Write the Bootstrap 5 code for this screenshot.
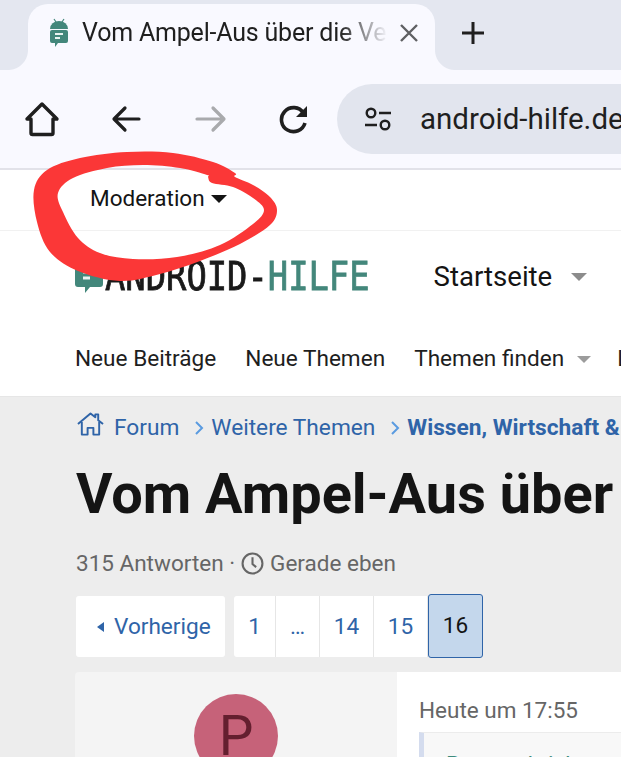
<!DOCTYPE html>
<html lang="de">
<head>
  <meta charset="UTF-8">
  <title>Vom Ampel-Aus über die Vertrauensfrage</title>
  <link href="https://cdn.jsdelivr.net/npm/bootstrap@5.3.3/dist/css/bootstrap.min.css" rel="stylesheet">
  <style>
    html, body {
      height: 757px;
      overflow: hidden;
    }
    body {
      font-family: Roboto, sans-serif;
      background-color: #ededed;
      color: #141414;
      position: relative;
    }
    .tab-strip {
      height: 70px;
      background-color: #e4e7f0;
      padding-left: 28px;
    }
    .browser-tab {
      width: 407px;
      height: 66px;
      background-color: #f9f9ff;
      border-radius: 20px 20px 0 0;
      position: relative;
      padding: 0 16px 8px 21px;
      font-size: 25px;
      letter-spacing: -.2px;
      color: #1f1f1f;
    }
    .browser-tab::before, .browser-tab::after {
      content: "";
      position: absolute;
      bottom: 0;
      width: 20px;
      height: 20px;
    }
    .browser-tab::before {
      left: -20px;
      background: radial-gradient(circle at 0 0, #e4e7f0 19.5px, #f9f9ff 20.5px);
    }
    .browser-tab::after {
      right: -20px;
      background: radial-gradient(circle at 100% 0, #e4e7f0 19.5px, #f9f9ff 20.5px);
    }
    .tab-title {
      width: 306px;
      margin-left: 13px;
      overflow: hidden;
      white-space: nowrap;
      -webkit-mask-image: linear-gradient(to right, #000 84%, transparent 100%);
      mask-image: linear-gradient(to right, #000 84%, transparent 100%);
    }
    .tab-new {
      margin-left: 25px;
      height: 66px;
      padding-bottom: 8px;
    }
    .tool-bar {
      height: 100px;
      background-color: #f9f9ff;
      padding-left: 24px;
      border-bottom: 2px solid #e2e2e9;
    }
    .tool-btn {
      width: 36px;
      flex: none;
      margin-right: 48px;
    }
    .tool-btn:nth-child(3) {
      margin-right: 51px;
    }
    .tool-btn:nth-child(4) {
      margin-right: 22px;
    }
    .url-pill {
      flex: none;
      width: 284px;
      height: 70px;
      border-radius: 35px 0 0 35px;
      background-color: #e2e5ee;
      padding-left: 27px;
      font-size: 29.5px;
      color: #1f1f1f;
      white-space: nowrap;
      overflow: hidden;
    }
    .url-pill svg {
      margin-right: 28px;
      flex: none;
    }
    .mod-bar {
      height: 61px;
      background-color: #fff;
      padding: 0 0 2px 90px;
      border-bottom: 1px solid #f1f1f1;
      font-size: 22.5px;
      color: #141414;
    }
    .caret-down {
      display: inline-block;
      border-style: solid;
      border-color: #141414 transparent transparent;
      border-width: 8px 8px 0;
    }
    .mod-bar .caret-down {
      margin-left: 6px;
    }
    .site-head {
      height: 166px;
      background-color: #fff;
      padding-left: 75px;
      border-bottom: 1px solid #e6e6e6;
    }
    .logo-row {
      height: 92px;
    }
    .logo-mark {
      width: 30px;
      flex: none;
    }
    .logo-text {
      font-family: "DejaVu Sans Mono", monospace;
      font-size: 33.8px;
      color: #1a1a1a;
      -webkit-text-stroke: .7px currentColor;
      transform: scaleY(1.18);
      line-height: 1;
    }
    .logo-text span {
      color: #43877b;
    }
    .main-link {
      margin-left: 64px;
      font-size: 27.6px;
      color: #141414;
    }
    .main-link .caret-down {
      border-color: #8c8c8c transparent transparent;
      border-width: 8px 8px 0;
      margin-left: 19px;
    }
    .sub-nav {
      font-size: 22.6px;
      color: #1e1e1e;
      white-space: nowrap;
      gap: 29px;
      padding-top: 19px;
    }
    .sub-nav .caret-down {
      border-color: #9c9c9c transparent transparent;
      border-width: 7px 7px 0;
      margin-left: 13px;
      vertical-align: 3px;
    }
    .nav-last {
      margin-left: -3px;
    }
    .crumbs {
      padding: 14px 0 0 77px;
      font-size: 22.7px;
      white-space: nowrap;
      color: #2f64a8;
      height: 60px;
    }
    .crumbs svg {
      flex: none;
    }
    .crumb-home {
      margin-right: 10px;
    }
    .crumb-sep {
      margin: 9px 7px 0 15px;
    }
    .crumbs b {
      font-weight: 700;
    }
    .thread-title {
      font-size: 55.9px;
      font-weight: 700;
      margin: 0 0 0 76px;
      white-space: nowrap;
      color: #141414;
      line-height: 74px;
    }
    .thread-meta {
      margin: 17px 0 0 76px;
      font-size: 22.5px;
      line-height: 31px;
      color: #666;
      gap: 6px;
    }
    .pager {
      margin: 17px 0 0 76px;
      gap: 9px;
      height: 62px;
    }
    .pager .pagination {
      --bs-pagination-border-width: 0;
      margin: 0;
    }
    .pager .page-link {
      height: 61px;
      background-color: #fff;
      color: #2f64a8;
      border-right: 1px solid #e6e6e6;
      border-radius: 0;
      font-size: 22.6px;
      display: flex;
      align-items: center;
      justify-content: center;
      padding: 0;
    }
    .pager .page-item:not(:first-child) .page-link {
      margin-left: 0;
    }
    .pager .page-item:first-child .page-link {
      border-radius: 3px 0 0 3px;
    }
    .pager .page-item:last-child .page-link {
      border-radius: 3px;
    }
    .pager .page-item.active .page-link {
      background-color: #c4d7ec;
      color: #141414;
      border: 1px solid #2f64a8;
      height: 64px;
      margin-top: -2px;
    }
    .pager .prev-link {
      width: 149px;
      gap: 10px;
      justify-content: flex-start;
      padding-left: 21px;
      border-right: 0;
      border-radius: 3px !important;
    }
    .prev-link i {
      border-style: solid;
      border-color: transparent #2f64a8 transparent transparent;
      border-width: 5px 7px 5px 0;
    }
    .pager .w-1 { width: 42px; }
    .pager .w-dots { width: 44px; }
    .pager .w-14 { width: 54px; }
    .pager .w-15 { width: 54px; }
    .pager .w-16 { width: 55px; }
    .post-box {
      margin: 14px 0 0 75px;
      height: 90px;
      border-radius: 4px 0 0 0;
      overflow: hidden;
    }
    .post-user {
      width: 322px;
      flex: none;
      background-color: #f4f4f4;
      padding-top: 22px;
    }
    .avatar-p {
      width: 84px;
      height: 84px;
      border-radius: 50%;
      background-color: #c66279;
      color: #641f2f;
      font-size: 55px;
      line-height: 84px;
      text-align: center;
    }
    .post-body {
      background-color: #fff;
      padding: 26px 0 0 22px;
      font-size: 22.5px;
      color: #666;
      line-height: 24px;
    }
    .post-quote {
      margin-top: 10px;
      height: 60px;
      background-color: #f8f8f8;
      border-top: 1px solid #ececec;
      border-left: 5px solid #d4dcee;
      padding: 19px 0 0 22px;
      color: #3d8b7c;
      white-space: nowrap;
    }
    .red-ring {
      position: absolute;
      left: 0;
      top: 0;
    }
  </style>
</head>
<body>
  <div class="tab-strip d-flex align-items-end">
    <div class="browser-tab d-flex align-items-center">
      <svg class="flex-shrink-0" width="20" height="30" viewBox="0 0 20 30">
        <path d="M5 1l2 3M15 1l-2 3" stroke="#43877b" stroke-width="1.2"/>
        <path d="M1 11a9 8 0 0 1 18 0z" fill="#43877b"/>
        <path d="M3 12h14a2 2 0 0 1 2 2v9a2 2 0 0 1-2 2H9l-3 4v-4H3a2 2 0 0 1-2-2v-9a2 2 0 0 1 2-2z" fill="#43877b"/>
        <path d="M6 16h8M6 20h5" stroke="#e9f3f1" stroke-width="2"/>
      </svg>
      <span class="tab-title">Vom Ampel-Aus über die Vertrauensfrage</span>
      <svg class="ms-auto" width="20" height="20" viewBox="0 0 20 20"><path d="M2 2l16 16M18 2L2 18" stroke="#5f6063" stroke-width="2.4"/></svg>
    </div>
    <div class="tab-new d-flex align-items-center">
      <svg width="26" height="26" viewBox="0 0 26 26"><path d="M13 2v22M2 13h22" stroke="#1f1f1f" stroke-width="3"/></svg>
    </div>
  </div>

  <div class="tool-bar d-flex align-items-center">
    <div class="tool-btn">
      <svg width="36" height="38" viewBox="0 0 36 38"><path d="M3 19L18 4l15 15h-4v14a1.500 1.500 0 0 1-1.500 1.500h-19A1.500 1.500 0 0 1 7 33V19z" fill="none" stroke="#1f1f1f" stroke-width="3.400" stroke-linejoin="round"/></svg>
    </div>
    <div class="tool-btn">
      <svg width="36" height="32" viewBox="0 0 36 32"><path d="M31 16H7M17 5L6 16l11 11" fill="none" stroke="#1f1f1f" stroke-width="3.200" stroke-linecap="round" stroke-linejoin="round"/></svg>
    </div>
    <div class="tool-btn">
      <svg width="36" height="32" viewBox="0 0 36 32"><path d="M5 16h26M21 5l11 11-11 11" fill="none" stroke="#a9aaad" stroke-width="3.200" stroke-linecap="round" stroke-linejoin="round"/></svg>
    </div>
    <div class="tool-btn">
      <svg width="30" height="32" viewBox="0 0 30 32"><path d="M24.500 10A12 12 0 1 0 26 20" fill="none" stroke="#1f1f1f" stroke-width="3.600"/><path d="M28 3v11H17z" fill="#1f1f1f"/></svg>
    </div>
    <div class="url-pill d-flex align-items-center">
      <svg width="28" height="24" viewBox="0 0 28 24"><circle cx="7" cy="6" r="4.300" fill="none" stroke="#1f1f1f" stroke-width="2.400"/><circle cx="21" cy="18" r="4.300" fill="none" stroke="#1f1f1f" stroke-width="2.400"/><path d="M15 6h12M1 18h12" stroke="#1f1f1f" stroke-width="2.600"/></svg>
      <span>android-hilfe.de</span>
    </div>
  </div>

  <div class="mod-bar d-flex align-items-center">
    <span>Moderation</span><i class="caret-down"></i>
  </div>

  <header class="site-head">
    <div class="logo-row d-flex align-items-center">
      <svg class="logo-mark" width="30" height="34" viewBox="0 0 30 34">
        <path d="M3 2h22a3 3 0 0 1 3 3v19a3 3 0 0 1-3 3H15l-5 6v-6H3a3 3 0 0 1-3-3V5a3 3 0 0 1 3-3z" fill="#43877b"/>
        <path d="M8 12h12M8 18h7" stroke="#e9f3f1" stroke-width="3"/>
      </svg>
      <div class="logo-text">ANDROID-<span>HILFE</span></div>
      <div class="main-link d-flex align-items-center">Startseite<i class="caret-down"></i></div>
    </div>
    <nav class="sub-nav d-flex">
      <span>Neue Beiträge</span>
      <span>Neue Themen</span>
      <span>Themen finden<i class="caret-down"></i></span>
      <span class="nav-last">Letzte</span>
    </nav>
  </header>

  <div class="crumbs d-flex">
    <svg class="crumb-home" width="27" height="26" viewBox="0 0 28 26"><path d="M1 13L14 2l5 4V3h3v6l5 4M5 11v13h6v-7h6v7h6V11" fill="none" stroke="#2f64a8" stroke-width="2" stroke-linejoin="round"/></svg>
    <span>Forum</span>
    <svg class="crumb-sep" width="10" height="16" viewBox="0 0 10 16"><path d="M2 2l6 6-6 6" fill="none" stroke="#5a9be0" stroke-width="2"/></svg>
    <span>Weitere Themen</span>
    <svg class="crumb-sep" width="10" height="16" viewBox="0 0 10 16"><path d="M2 2l6 6-6 6" fill="none" stroke="#5a9be0" stroke-width="2"/></svg>
    <b>Wissen, Wirtschaft &amp;</b>
  </div>

  <h1 class="thread-title">Vom Ampel-Aus über</h1>

  <div class="thread-meta d-flex align-items-center">
    <span>315 Antworten ·</span>
    <svg width="23" height="23" viewBox="0 0 22 22"><circle cx="11" cy="11" r="9.500" fill="none" stroke="#666" stroke-width="2"/><path d="M11 5v6.500l3.500 3" fill="none" stroke="#666" stroke-width="2"/></svg>
    <span>Gerade eben</span>
  </div>

  <div class="pager d-flex">
    <ul class="pagination">
      <li class="page-item"><a class="page-link prev-link" href="#"><i></i>Vorherige</a></li>
    </ul>
    <ul class="pagination">
      <li class="page-item"><a class="page-link w-1" href="#">1</a></li>
      <li class="page-item"><a class="page-link w-dots" href="#">…</a></li>
      <li class="page-item"><a class="page-link w-14" href="#">14</a></li>
      <li class="page-item"><a class="page-link w-15" href="#">15</a></li>
      <li class="page-item active"><a class="page-link w-16" href="#">16</a></li>
    </ul>
  </div>

  <div class="post-box d-flex">
    <div class="post-user d-flex justify-content-center">
      <div class="avatar-p">P</div>
    </div>
    <div class="post-body flex-grow-1">
      <div>Heute um 17:55</div>
      <div class="post-quote">Peter schrieb:</div>
    </div>
  </div>

  <svg class="red-ring" width="621" height="300" viewBox="0 0 621 300">
    <path id="ring" fill="#fb3737" fill-rule="evenodd"/>
  </svg>

  <script>
    const aussen = [[235,173],[213,162],[173,153],[127,152],[80,158],[47,170],[34,190],[37,222],[50,252],[78,271],[120,281],[160,274],[200,261],[240,244],[270,225],[277,210],[270,197],[253,185],[235,177]];
    const innen = [[208,177],[212,183],[233,187],[253,198],[264,210],[253,224],[220,245],[177,257],[133,259],[100,253],[78,238],[63,212],[58,193],[73,178],[107,168],[143,165],[180,168],[207,175]];

    // geschlossene Kurve durch alle Punkte
    function glatt(p) {
      const n = p.length;
      let d = `M${p[0][0]} ${p[0][1]}`;
      for (let i = 0; i < n; i++) {
        const a = p[(i - 1 + n) % n], b = p[i], c = p[(i + 1) % n], e = p[(i + 2) % n];
        d += `C${b[0] + (c[0] - a[0]) / 6} ${b[1] + (c[1] - a[1]) / 6} ${c[0] - (e[0] - b[0]) / 6} ${c[1] - (e[1] - b[1]) / 6} ${c[0]} ${c[1]}`;
      }
      return d + 'Z';
    }

    document.getElementById('ring').setAttribute('d', glatt(aussen) + glatt(innen));
  </script>
  <script src="https://cdn.jsdelivr.net/npm/bootstrap@5.3.3/dist/js/bootstrap.bundle.min.js"></script>
</body>
</html>
